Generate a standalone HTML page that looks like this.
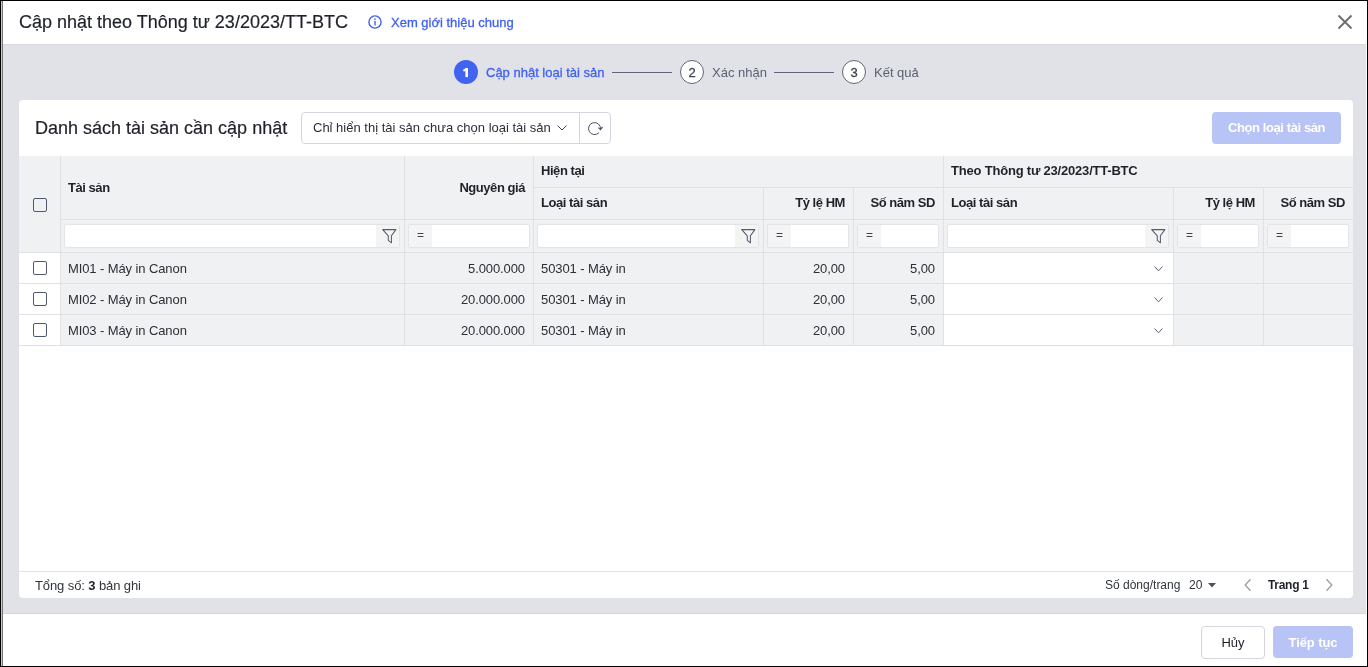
<!DOCTYPE html>
<html><head><meta charset="utf-8">
<style>
*{box-sizing:border-box;margin:0;padding:0}
html,body{width:1368px;height:667px;overflow:hidden;background:#000;font-family:"Liberation Sans",sans-serif;color:#1f2229}
.a{position:absolute}
.nw{white-space:nowrap}
#edgeL1{position:absolute;left:1px;top:1px;width:1px;height:665px;background:#c8c8c8}
#edgeL2{position:absolute;left:2px;top:1px;width:1px;height:665px;background:#777}
#modal{position:absolute;left:3px;top:1px;width:1364px;height:665px;background:#fff;overflow:hidden}
#gray{position:absolute;left:0;top:43px;width:1363px;height:570px;background:#e1e2e7;border-top:1px solid #d9dadf;border-bottom:1px solid #d6d7dc}
.title{left:16px;top:11px;font-size:18px;-webkit-text-stroke:0.2px #1f2229}
.link{left:388px;top:14px;font-size:13px;color:#4262f0;-webkit-text-stroke:0.3px #4262f0}
.circ{width:24px;height:24px;border-radius:50%;font-size:13px;text-align:center;line-height:22px}
.circ.on{background:#4262f0;color:#fff;font-weight:bold;line-height:24px}
.circ.off{border:1px solid #5f6577;color:#3e4456;background:#fff;line-height:24px;-webkit-text-stroke:0.3px #3e4456}
.stxt{font-size:13px;top:64px}
.sline{height:1px;width:60px;background:#5f6577;top:71px}
#card{left:16px;top:99px;width:1334px;height:498px;background:#fff;border-radius:4px;overflow:hidden}
.ctitle{left:16px;top:18px;font-size:18px;-webkit-text-stroke:0.2px #1f2229}
.sel{left:282px;top:12px;width:310px;height:32px;border:1px solid #d3d6dd;border-radius:4px}
.seltxt{left:11px;top:7px;font-size:13px;color:#2b2f36}
.seldiv{left:277px;top:0;width:1px;height:30px;background:#d3d6dd}
.btnsel{left:1193px;top:12px;width:129px;height:32px;background:#b8c3f6;border-radius:4px;color:#fff;font-weight:bold;font-size:13px;text-align:center;line-height:32px;letter-spacing:-0.4px}
.cb{width:14px;height:14px;border:1px solid #505870;border-radius:2px}
.th{font-size:13px;font-weight:bold;color:#1f2229;letter-spacing:-0.45px}
.td{font-size:13px;color:#2b2f36;letter-spacing:-0.1px}
.pg{font-size:12px;color:#30343b}
.fin{height:24px;background:#fff;border:1px solid #e3e4e8;border-radius:2px;overflow:hidden}
.ficon{top:0;width:23px;height:22px;background:#f4f4f5}
.feq{left:0;top:0;width:23px;height:22px;background:#f4f4f5;font-size:12px;color:#3e4456;text-align:center;line-height:20px}
</style></head>
<body>
<div id="edgeL1"></div><div id="edgeL2"></div>
<div id="modal" style="will-change:transform">
  <div class="a title nw">Cập nhật theo Thông tư 23/2023/TT-BTC</div>
  <svg class="a" style="left:365px;top:14px" width="14" height="14" viewBox="0 0 14 14"><circle cx="7" cy="7" r="6.1" fill="none" stroke="#4262f0" stroke-width="1.4"/><rect x="6.3" y="5.9" width="1.4" height="4.6" fill="#4262f0"/><rect x="6.3" y="3.4" width="1.4" height="1.5" fill="#4262f0"/></svg>
  <div class="a link nw">Xem giới thiệu chung</div>
  <svg class="a" style="left:1334px;top:13px" width="16" height="16" viewBox="0 0 16 16"><path d="M1.5 1.5L14.5 14.5M14.5 1.5L1.5 14.5" stroke="#6b6b6b" stroke-width="1.8"/></svg>
  <div id="gray"></div>
  <div class="a circ on" style="left:451px;top:59px"></div><svg class="a" style="left:456px;top:62px" width="16" height="18" viewBox="0 0 16 18"><path d="M7.7 5V14.1" stroke="#fff" stroke-width="2.5"/><path d="M4.4 7.8L7.9 5.6" stroke="#fff" stroke-width="2"/></svg>
  <div class="a stxt nw" style="left:483px;color:#4262f0;-webkit-text-stroke:0.3px #4262f0">Cập nhật loại tài sản</div>
  <div class="a sline" style="left:609px"></div>
  <div class="a circ off" style="left:677px;top:59px">2</div>
  <div class="a stxt nw" style="left:709px;color:#5b6173">Xác nhận</div>
  <div class="a sline" style="left:771px"></div>
  <div class="a circ off" style="left:839px;top:59px">3</div>
  <div class="a stxt nw" style="left:871px;color:#5b6173">Kết quả</div>
  <div id="card" class="a">
<div class="a ctitle nw">Danh sách tài sản cần cập nhật</div>
<div class="a sel"><span class="a nw seltxt">Chỉ hiển thị tài sản chưa chọn loại tài sản</span><div class="a seldiv"></div></div>
<svg class="a" style="left:538px;top:25px" width="10" height="6" viewBox="0 0 10 6"><path d="M0.5 0.5L5 5L9.5 0.5" fill="none" stroke="#3b4256" stroke-width="1"/></svg>
<svg class="a" style="left:565px;top:18px" width="22" height="20" viewBox="0 0 22 20"><path d="M15 14.6A6 6 0 1 1 16.5 11.3" fill="none" stroke="#4b5163" stroke-width="1"/><path d="M14.4 9.6L16.5 11.6L18.5 8.9" fill="none" stroke="#4b5163" stroke-width="1.1"/></svg>
<div class="a btnsel nw">Chọn loại tài sản</div>
<div class="a" style="left:0;top:56px;width:1334px;height:96px;background:#f0f1f3"></div>
<div class="a" style="left:42px;top:153px;width:882px;height:30px;background:#f0f1f3"></div>
<div class="a" style="left:1155px;top:153px;width:179px;height:30px;background:#f0f1f3"></div>
<div class="a" style="left:42px;top:184px;width:882px;height:30px;background:#f0f1f3"></div>
<div class="a" style="left:1155px;top:184px;width:179px;height:30px;background:#f0f1f3"></div>
<div class="a" style="left:42px;top:215px;width:882px;height:30px;background:#f0f1f3"></div>
<div class="a" style="left:1155px;top:215px;width:179px;height:30px;background:#f0f1f3"></div>
<div class="a" style="left:514px;top:87px;width:820px;height:1px;background:#e0e1e3"></div>
<div class="a" style="left:41px;top:119px;width:1293px;height:1px;background:#e0e1e3"></div>
<div class="a" style="left:0px;top:152px;width:1334px;height:1px;background:#e0e1e3"></div>
<div class="a" style="left:0px;top:183px;width:1334px;height:1px;background:#e0e1e3"></div>
<div class="a" style="left:0px;top:214px;width:1334px;height:1px;background:#e0e1e3"></div>
<div class="a" style="left:0px;top:245px;width:1334px;height:1px;background:#e0e1e3"></div>
<div class="a" style="left:41px;top:56px;width:1px;height:189px;background:#e0e1e3"></div>
<div class="a" style="left:385px;top:56px;width:1px;height:189px;background:#e0e1e3"></div>
<div class="a" style="left:514px;top:56px;width:1px;height:189px;background:#e0e1e3"></div>
<div class="a" style="left:744px;top:88px;width:1px;height:157px;background:#e0e1e3"></div>
<div class="a" style="left:834px;top:88px;width:1px;height:157px;background:#e0e1e3"></div>
<div class="a" style="left:924px;top:56px;width:1px;height:189px;background:#e0e1e3"></div>
<div class="a" style="left:1154px;top:88px;width:1px;height:157px;background:#e0e1e3"></div>
<div class="a" style="left:1244px;top:88px;width:1px;height:157px;background:#e0e1e3"></div>
<div class="a cb" style="left:14px;top:98px"></div>
<div class="a cb" style="left:14px;top:161px"></div>
<div class="a cb" style="left:14px;top:192px"></div>
<div class="a cb" style="left:14px;top:223px"></div>
<div class="a th nw" style="left:49px;top:80px">Tài sản</div>
<div class="a th nw" style="left:385px;width:121px;text-align:right;top:80px">Nguyên giá</div>
<div class="a th nw" style="left:522px;top:63px">Hiện tại</div>
<div class="a th nw" style="left:522px;top:95px">Loại tài sản</div>
<div class="a th nw" style="left:744px;width:82px;text-align:right;top:95px">Tỷ lệ HM</div>
<div class="a th nw" style="left:834px;width:82px;text-align:right;top:95px">Số năm SD</div>
<div class="a th nw" style="letter-spacing:-0.2px;left:932px;top:63px">Theo Thông tư 23/2023/TT-BTC</div>
<div class="a th nw" style="left:932px;top:95px">Loại tài sản</div>
<div class="a th nw" style="left:1154px;width:82px;text-align:right;top:95px">Tỷ lệ HM</div>
<div class="a th nw" style="left:1244px;width:82px;text-align:right;top:95px">Số năm SD</div>
<div class="a fin" style="left:45px;top:124px;width:336px"><div class="a ficon" style="right:0"><svg class="a" style="left:6px;top:4px" width="15" height="15" viewBox="0 0 15 15"><path d="M0.7 0.6H13.9L9.4 6.8V13.8L6.3 11.4V6.8Z" fill="none" stroke="#535b6e" stroke-width="1.05" stroke-linejoin="round"/></svg></div></div>
<div class="a fin" style="left:389px;top:124px;width:122px"><div class="a feq">=</div></div>
<div class="a fin" style="left:518px;top:124px;width:222px"><div class="a ficon" style="right:0"><svg class="a" style="left:6px;top:4px" width="15" height="15" viewBox="0 0 15 15"><path d="M0.7 0.6H13.9L9.4 6.8V13.8L6.3 11.4V6.8Z" fill="none" stroke="#535b6e" stroke-width="1.05" stroke-linejoin="round"/></svg></div></div>
<div class="a fin" style="left:748px;top:124px;width:82px"><div class="a feq">=</div></div>
<div class="a fin" style="left:838px;top:124px;width:82px"><div class="a feq">=</div></div>
<div class="a fin" style="left:928px;top:124px;width:222px"><div class="a ficon" style="right:0"><svg class="a" style="left:6px;top:4px" width="15" height="15" viewBox="0 0 15 15"><path d="M0.7 0.6H13.9L9.4 6.8V13.8L6.3 11.4V6.8Z" fill="none" stroke="#535b6e" stroke-width="1.05" stroke-linejoin="round"/></svg></div></div>
<div class="a fin" style="left:1158px;top:124px;width:82px"><div class="a feq">=</div></div>
<div class="a fin" style="left:1248px;top:124px;width:82px"><div class="a feq">=</div></div>
<div class="a td nw" style="left:49px;top:161px">MI01 - Máy in Canon</div>
<div class="a td nw" style="left:385px;width:121px;text-align:right;top:161px">5.000.000</div>
<div class="a td nw" style="left:522px;top:161px">50301 - Máy in</div>
<div class="a td nw" style="left:744px;width:82px;text-align:right;top:161px">20,00</div>
<div class="a td nw" style="left:834px;width:82px;text-align:right;top:161px">5,00</div>
<svg class="a" style="left:1135px;top:166px" width="10" height="6" viewBox="0 0 10 6"><path d="M0.5 0.5L4.5 4.8L8.5 0.5" fill="none" stroke="#5b6173" stroke-width="1"/></svg>
<div class="a td nw" style="left:49px;top:192px">MI02 - Máy in Canon</div>
<div class="a td nw" style="left:385px;width:121px;text-align:right;top:192px">20.000.000</div>
<div class="a td nw" style="left:522px;top:192px">50301 - Máy in</div>
<div class="a td nw" style="left:744px;width:82px;text-align:right;top:192px">20,00</div>
<div class="a td nw" style="left:834px;width:82px;text-align:right;top:192px">5,00</div>
<svg class="a" style="left:1135px;top:197px" width="10" height="6" viewBox="0 0 10 6"><path d="M0.5 0.5L4.5 4.8L8.5 0.5" fill="none" stroke="#5b6173" stroke-width="1"/></svg>
<div class="a td nw" style="left:49px;top:223px">MI03 - Máy in Canon</div>
<div class="a td nw" style="left:385px;width:121px;text-align:right;top:223px">20.000.000</div>
<div class="a td nw" style="left:522px;top:223px">50301 - Máy in</div>
<div class="a td nw" style="left:744px;width:82px;text-align:right;top:223px">20,00</div>
<div class="a td nw" style="left:834px;width:82px;text-align:right;top:223px">5,00</div>
<svg class="a" style="left:1135px;top:228px" width="10" height="6" viewBox="0 0 10 6"><path d="M0.5 0.5L4.5 4.8L8.5 0.5" fill="none" stroke="#5b6173" stroke-width="1"/></svg>
<div class="a" style="left:0px;top:471px;width:1334px;height:1px;background:#e0e1e3"></div>
<div class="a td nw" style="left:16px;top:478px;color:#30343b">Tổng số: <b style="color:#1f2229">3</b> bản ghi</div>
<div class="a pg nw" style="left:1086px;top:478px">Số dòng/trang</div>
<div class="a pg nw" style="left:1170px;top:478px">20</div>
<svg class="a" style="left:1189px;top:483px" width="8" height="5" viewBox="0 0 8 5"><path d="M0 0H8L4 4.6Z" fill="#4b5163"/></svg>
<svg class="a" style="left:1224px;top:478px" width="10" height="14" viewBox="0 0 10 14"><path d="M7.5 1.2L2.2 7L7.5 12.8" fill="none" stroke="#9a9ca3" stroke-width="1.3"/></svg>
<div class="a pg nw" style="left:1249px;top:478px;font-weight:bold;letter-spacing:-0.3px;color:#1f2229">Trang 1</div>
<svg class="a" style="left:1305px;top:478px" width="10" height="14" viewBox="0 0 10 14"><path d="M2.5 1.2L7.8 7L2.5 12.8" fill="none" stroke="#9a9ca3" stroke-width="1.3"/></svg>
  </div>
  <div class="a" style="left:1198px;top:625px;width:64px;height:33px;border:1px solid #d3d6dd;border-radius:4px;font-size:13px;text-align:center;line-height:31px;color:#1f2229">Hủy</div>
  <div class="a" style="left:1270px;top:625px;width:80px;height:32px;background:#b8c3f6;border-radius:4px;font-size:13px;font-weight:bold;text-align:center;line-height:33px;color:#fff;letter-spacing:-0.1px">Tiếp tục</div>
</div>
</body></html>
